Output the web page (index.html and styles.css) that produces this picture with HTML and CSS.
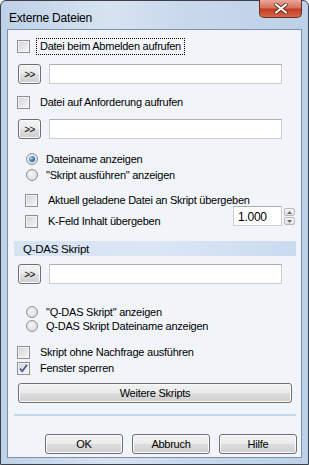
FILE: index.html
```html
<!DOCTYPE html>
<html>
<head>
<meta charset="utf-8">
<title>Externe Dateien</title>
<link rel="stylesheet" href="styles.css">
</head>
<body>
<div class="window">
  <div class="titlebar">
    <span class="title">Externe Dateien</span>
    <div class="close">
      <svg width="14" height="11" viewBox="0 0 14 11"><path d="M2 1.5 L12 9.5 M12 1.5 L2 9.5" stroke="#5a2018" stroke-width="3.6" stroke-linecap="round"/><path d="M2 1.5 L12 9.5 M12 1.5 L2 9.5" stroke="#fff" stroke-width="2.2" stroke-linecap="round"/></svg>
    </div>
  </div>
  <div class="client">
    <div class="row r1"><span class="box"></span><span class="lbl focus">Datei beim Abmelden aufrufen</span></div>
    <div class="pick r2"><div class="btn more">&gt;&gt;</div><div class="field"></div></div>
    <div class="row r3"><span class="box"></span><span class="lbl">Datei auf Anforderung aufrufen</span></div>
    <div class="pick r4"><div class="btn more">&gt;&gt;</div><div class="field"></div></div>
    <div class="row indent r5"><span class="radio on"></span><span class="lbl">Dateiname anzeigen</span></div>
    <div class="row indent"><span class="radio"></span><span class="lbl">"Skript ausführen" anzeigen</span></div>
    <div class="row indent r6"><span class="box"></span><span class="lbl">Aktuell geladene Datei an Skript übergeben</span></div>
    <div class="kfeld">
      <div class="row indent kcheck"><span class="box"></span><span class="lbl">K-Feld Inhalt übergeben</span></div>
      <div class="num">1.000</div>
      <div class="spin">
        <div class="arrow"><svg width="5" height="3" viewBox="0 0 5 3"><path d="M0 3 L2.5 0 L5 3 Z" fill="#6d6d6d"/></svg></div>
        <div class="arrow"><svg width="5" height="3" viewBox="0 0 5 3"><path d="M0 0 L2.5 3 L5 0 Z" fill="#6d6d6d"/></svg></div>
      </div>
    </div>
    <div class="section">Q-DAS Skript</div>
    <div class="pick r7"><div class="btn more">&gt;&gt;</div><div class="field"></div></div>
    <div class="row indent tight r8"><span class="radio"></span><span class="lbl">"Q-DAS Skript" anzeigen</span></div>
    <div class="row indent tight"><span class="radio"></span><span class="lbl">Q-DAS Skript Dateiname anzeigen</span></div>
    <div class="row r9"><span class="box"></span><span class="lbl">Skript ohne Nachfrage ausführen</span></div>
    <div class="row"><span class="box checked"><svg width="11" height="11" viewBox="0 0 11 11"><path d="M2 5.5 L4.3 8.2 L9 1.8" fill="none" stroke="#3d5894" stroke-width="1.7"/></svg></span><span class="lbl">Fenster sperren</span></div>
    <div class="btn wide">Weitere Skripts</div>
    <div class="sep"></div>
    <div class="actions">
      <div class="btn act">OK</div>
      <div class="btn act">Abbruch</div>
      <div class="btn act">Hilfe</div>
    </div>
  </div>
</div>
</body>
</html>
```

FILE: styles.css
```css
body {
margin: 0;
background: #fff;
font-family: "Liberation Sans", Arial, sans-serif;
}
.window {
width: 309px;
height: 465px;
box-sizing: border-box;
border: 1px solid #3c4048;
border-radius: 6px 6px 0 0;
background: linear-gradient(to right, #bfd1e7, #d6e3f1 35%, #c9d9ec 60%, #bcd0e7);
display: flex;
flex-direction: column;
}
.titlebar {
height: 28px;
display: flex;
justify-content: space-between;
align-items: flex-start;
}
.title {
margin: 10px 0 0 8px;
font-size: 12px;
letter-spacing: -0.2px;
color: #000;
}
.close {
width: 43px;
height: 18px;
margin-right: 6px;
margin-top: -1px;
box-sizing: border-box;
border: 1px solid #6b2e24;
border-top: none;
border-radius: 0 0 5px 5px;
background: linear-gradient(#e9a99c, #d7715d 45%, #c23c22 55%, #d8664b);
display: flex;
align-items: center;
justify-content: center;
}
.client {
flex: 1;
margin: 0 6px 6px 6px;
border: 1px solid #7e91aa;
background: #f1f5fa;
display: flex;
flex-direction: column;
padding: 0 0 0 9px;
font-size: 11px;
letter-spacing: -0.25px;
color: #000;
}
.row {
display: flex;
align-items: center;
height: 16px;
}
.row.tight {
height: 14px;
}
.indent {
padding-left: 8px;
}
.box {
width: 13px;
height: 13px;
box-sizing: border-box;
border: 1px solid #8e8f8f;
background: linear-gradient(135deg, #d2d2d2, #f8f8f8);
box-shadow: inset 0 0 0 1px #f4f4f4;
display: flex;
align-items: center;
justify-content: center;
flex: none;
}
.radio {
width: 12px;
height: 12px;
box-sizing: border-box;
border: 1px solid #8e8f8f;
border-radius: 50%;
background: radial-gradient(circle at 40% 40%, #f6f6f6, #d4d4d4);
margin-left: 1px;
display: flex;
align-items: center;
justify-content: center;
flex: none;
}
.radio.on::after {
content: "";
width: 6px;
height: 6px;
border-radius: 50%;
background: radial-gradient(circle at 35% 35%, #a9d3f5, #2c6fb0 60%, #17416d);
}
.lbl {
margin-left: 10px;
white-space: nowrap;
}
.radio + .lbl {
margin-left: 8px;
}
.focus {
margin-left: 7px;
padding: 1px 3px 2px 3px;
outline: 1px dotted #000;
}
.r1 { margin-top: 8px; }
.r2 { margin-top: 10px; }
.r3 { margin-top: 10px; }
.r4 { margin-top: 9px; }
.r5 { margin-top: 12px; }
.r6 { margin-top: 9px; }
.r7 { margin-top: 8px; }
.r8 { margin-top: 21px; }
.r9 { margin-top: 11px; }
.pick {
display: flex;
align-items: flex-start;
height: 20px;
}
.btn {
box-sizing: border-box;
border: 1px solid #707070;
border-radius: 3px;
background: linear-gradient(#f2f2f2, #ebebeb 50%, #dddddd 51%, #cfcfcf);
box-shadow: inset 0 0 0 1px #fbfbfb;
display: flex;
align-items: center;
justify-content: center;
color: #000;
}
.more {
width: 23px;
height: 20px;
margin-left: 1px;
font-size: 10px;
letter-spacing: -0.5px;
}
.field {
width: 233px;
height: 20px;
margin-left: 8px;
box-sizing: border-box;
border: 1px solid #c9ced6;
border-top-color: #abadb3;
background: #fff;
}
.kfeld {
display: flex;
align-items: flex-start;
height: 22px;
margin-top: -2px;
}
.kcheck {
margin-top: 7px;
width: 200px;
}
.num {
width: 49px;
height: 20px;
box-sizing: border-box;
border: 1px solid #c9ced6;
border-top-color: #abadb3;
background: #fff;
padding: 3px 0 0 4px;
font-size: 12px;
margin-left: 8px;
}
.spin {
margin-left: 2px;
display: flex;
flex-direction: column;
gap: 1px;
margin-top: 2px;
}
.arrow {
width: 11px;
height: 8px;
box-sizing: border-box;
border: 1px solid #b5b9c0;
border-radius: 2px;
background: linear-gradient(#f7f7f7, #e2e2e2);
display: flex;
align-items: center;
justify-content: center;
}
.section {
margin: 13px 5px 0 -3px;
height: 15px;
padding-left: 9px;
background: linear-gradient(to right, #d6e3f3, #dbe7f5 50%, #c9dbf0);
display: flex;
align-items: center;
font-size: 11.5px;
}
.wide {
margin-top: 7px;
width: 274px;
height: 20px;
margin-left: 1px;
}
.sep {
margin: 11px 5px 0 -3px;
height: 2px;
background: #c6d7ec;
}
.actions {
margin-top: 18px;
display: flex;
gap: 9px;
padding-left: 28px;
}
.act {
width: 78px;
height: 20px;
}
```
